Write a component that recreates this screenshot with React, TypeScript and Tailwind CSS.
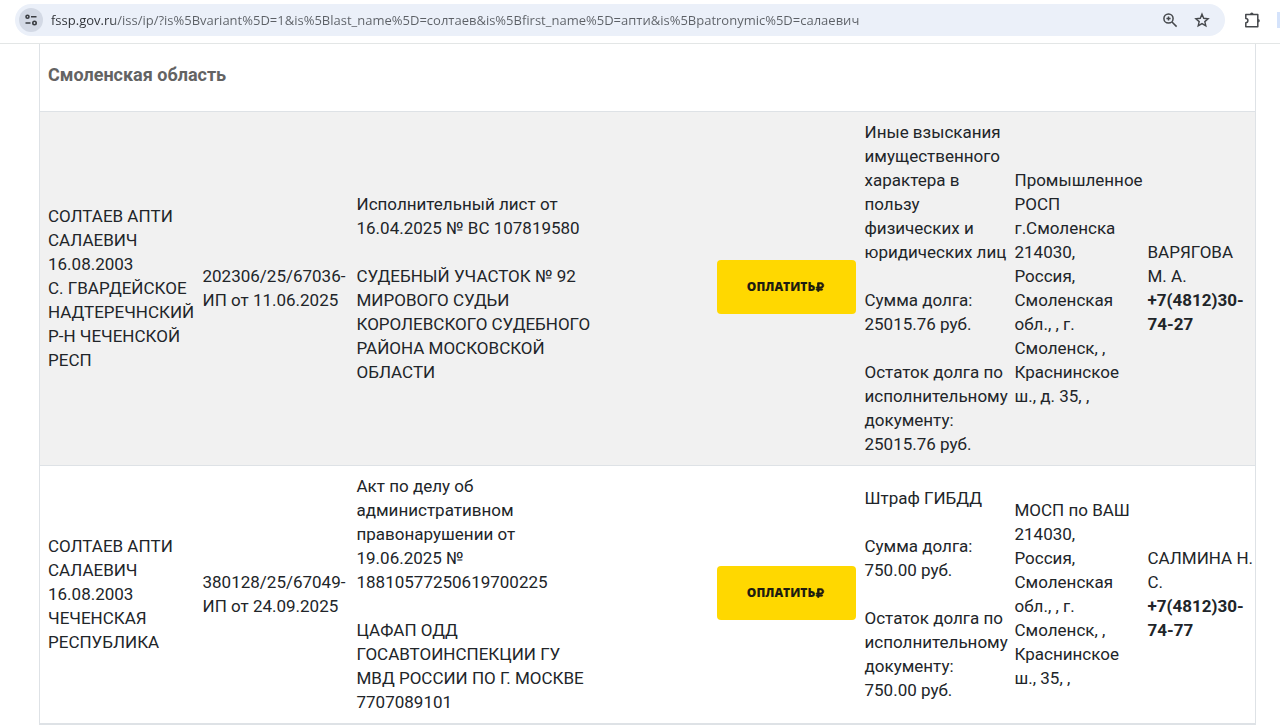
import { FaRubleSign } from "react-icons/fa";

const columns = [
  { id: "debtor", width: "w-[155px]" },
  { id: "case", width: "w-[154px]" },
  { id: "document", width: "w-[244px]" },
  { id: "end", width: "w-[116px]" },
  { id: "pay", width: "w-[148px]" },
  { id: "subject", width: "w-[150px]" },
  { id: "department", width: "w-[133px]" },
  { id: "officer", width: "w-[116px]" },
];

const cases = [
  {
    id: "202306",
    debtor: "СОЛТАЕВ АПТИ\nСАЛАЕВИЧ\n16.08.2003\nС. ГВАРДЕЙСКОЕ\nНАДТЕРЕЧНСКИЙ\nР-Н ЧЕЧЕНСКОЙ\nРЕСП",
    number: "202306/25/67036-\nИП от 11.06.2025",
    document:
      "Исполнительный лист от\n16.04.2025 № ВС 107819580\n\nСУДЕБНЫЙ УЧАСТОК № 92\nМИРОВОГО СУДЬИ\nКОРОЛЕВСКОГО СУДЕБНОГО\nРАЙОНА МОСКОВСКОЙ\nОБЛАСТИ",
    subject:
      "Иные взыскания\nимущественного\nхарактера в\nпользу\nфизических и\nюридических лиц\n\nСумма долга:\n25015.76 руб.\n\nОстаток долга по\nисполнительному\nдокументу:\n25015.76 руб.",
    department:
      "Промышленное\nРОСП\nг.Смоленска\n214030,\nРоссия,\nСмоленская\nобл., , г.\nСмоленск, ,\nКраснинское\nш., д. 35, ,",
    officer: "ВАРЯГОВА\nМ. А.",
    phone: "+7(4812)30-\n74-27",
  },
  {
    id: "380128",
    debtor: "СОЛТАЕВ АПТИ\nСАЛАЕВИЧ\n16.08.2003\nЧЕЧЕНСКАЯ\nРЕСПУБЛИКА",
    number: "380128/25/67049-\nИП от 24.09.2025",
    document:
      "Акт по делу об\nадминистративном\nправонарушении от\n19.06.2025 №\n18810577250619700225\n\nЦАФАП ОДД\nГОСАВТОИНСПЕКЦИИ ГУ\nМВД РОССИИ ПО Г. МОСКВЕ\n7707089101",
    subject:
      "Штраф ГИБДД\n\nСумма долга:\n750.00 руб.\n\nОстаток долга по\nисполнительному\nдокументу:\n750.00 руб.",
    department:
      "МОСП по ВАШ\n214030,\nРоссия,\nСмоленская\nобл., , г.\nСмоленск, ,\nКраснинское\nш., 35, ,",
    officer: "САЛМИНА Н.\nС.",
    phone: "+7(4812)30-\n74-77",
  },
];

function BrowserBar() {
  return (
    <header className="flex h-11 items-start border-b border-[#e3e6e6] bg-white pt-1">
      <div className="ml-[15px] flex h-8 flex-1 items-center rounded-full bg-[#ebf0f9] pl-1 pr-[15px]">
        <button
          aria-label="Сведения о сайте"
          className="flex size-6 items-center justify-center rounded-full bg-[#d3d9e5] text-[#3a3d42]"
        >
          <svg viewBox="0 0 16 16" className="size-4" fill="none" stroke="currentColor" strokeWidth="1.6">
            <circle cx="4.5" cy="4.800" r="1.500" />
            <path d="M8 4.800h5.500M2.500 11h5" />
            <circle cx="11.500" cy="11" r="1.700" />
          </svg>
        </button>
        <input
          aria-label="Адрес страницы"
          className="ml-2 min-w-0 flex-1 bg-linear-to-r from-[#2f3237] from-[64px] to-[#5c6066] to-[64px] bg-clip-text pt-0.5 font-['Open_Sans',sans-serif] text-[13px] text-transparent outline-none"
          defaultValue="fssp.gov.ru/iss/ip/?is%5Bvariant%5D=1&is%5Blast_name%5D=солтаев&is%5Bfirst_name%5D=апти&is%5Bpatronymic%5D=салаевич"
        />
        <div className="flex items-center gap-4 text-[#45484c]">
          <button aria-label="Масштаб">
            <svg viewBox="0 0 16 16" className="size-4" fill="none" stroke="currentColor" strokeWidth="1.5">
              <circle cx="6.5" cy="6.5" r="4.6" />
              <path d="M10 10l4.6 4.6M6.5 4.4v4.2M4.4 6.5h4.2" />
            </svg>
          </button>
          <button aria-label="Добавить в закладки">
            <svg viewBox="0 0 16 16" className="size-4" fill="none" stroke="currentColor" strokeWidth="1.4">
              <path d="M8 2.200l1.700 4.100 4.400.4-3.300 2.900 1 4.300L8 11.600l-3.800 2.300 1-4.300L1.900 6.700l4.400-.4z" />
            </svg>
          </button>
        </div>
      </div>
      <div className="flex h-8 items-center gap-4 pl-[18px]">
        <button aria-label="Расширения" className="text-[#45484c]">
          <svg viewBox="0 0 18 18" className="size-[18px]" fill="none" stroke="currentColor" strokeWidth="1.5">
            <path d="M2.800 3.500h12v12.200h-12v-4a2.100 2.100 0 0 0 0-4.200z" strokeLinejoin="round" />
            <path d="M7.100 3.200a1.700 1.700 0 0 1 3.400 0zM15.100 8a1.700 1.700 0 0 1 0 3.400z" fill="currentColor" stroke="none" />
          </svg>
        </button>
        <div className="h-4 w-[3px] bg-[#d5e3fb]" />
      </div>
    </header>
  );
}

export default function App() {
  return (
    <div className="bg-white font-[Roboto,sans-serif] text-[#212529]">
      <BrowserBar />
      <main className="ml-[39px] mr-[25px]">
        <table className="w-full table-fixed border-collapse border border-t-0 border-b-2 border-[#dee2e6] text-[17px] leading-6">
          <colgroup>
            {columns.map((column) => (
              <col key={column.id} className={column.width} />
            ))}
          </colgroup>
          <tbody>
            <tr>
              <th colSpan={8} className="px-2 pb-6 pt-[19px] text-left text-lg leading-6 font-bold text-[#636363]">
                Смоленская область
              </th>
            </tr>
            {cases.map((item) => (
              <tr key={item.id} className="border-t border-[#dee2e6] odd:bg-white even:bg-[#f1f1f1]">
                <td className="whitespace-pre pt-2 pb-[9px] pl-2">{item.debtor}</td>
                <td className="whitespace-pre pt-2 pb-[9px] pl-2">{item.number}</td>
                <td className="whitespace-pre pt-2 pb-[9px] pl-2">{item.document}</td>
                <td />
                <td className="pt-2 pb-3 pl-2">
                  <button className="flex h-[54px] w-[139px] items-center justify-center rounded bg-[#ffd800] font-['Open_Sans',sans-serif] text-xs font-extrabold text-[#1f1c10]">
                    ОПЛАТИТЬ
                    <FaRubleSign className="size-[10px]" stroke="currentColor" strokeWidth={40} />
                  </button>
                </td>
                <td className="whitespace-pre pt-2 pb-[9px] pl-2">{item.subject}</td>
                <td className="whitespace-pre pt-2 pb-[9px] pl-2">{item.department}</td>
                <td className="whitespace-pre pt-2 pb-[9px] pl-2">
                  {item.officer}
                  <br />
                  <b>{item.phone}</b>
                </td>
              </tr>
            ))}
          </tbody>
        </table>
      </main>
    </div>
  );
}
